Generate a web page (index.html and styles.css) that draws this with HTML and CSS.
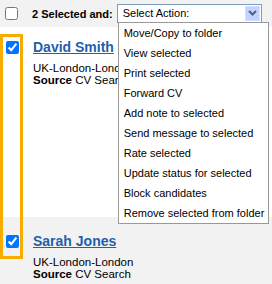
FILE: index.html
```html
<!DOCTYPE html>
<html lang="en">
<head>
    <meta charset="UTF-8">
    <title>Candidates</title>
    <link rel="stylesheet" href="styles.css">
</head>
<body>
    <div class="toolbar">
        <input type="checkbox" class="check">
        <span class="selected-label">2 Selected and:</span>
        <div class="select-box">
            <span class="select-text">Select Action:</span>
            <span class="select-button">
                <svg width="9" height="6" viewBox="0 0 9 6"><path d="M1 1 L4.5 4.5 L8 1" fill="none" stroke="#4d5f8c" stroke-width="2"/></svg>
            </span>
            <ul class="action-list">
                <li>Move/Copy to folder</li>
                <li>View selected</li>
                <li>Print selected</li>
                <li>Forward CV</li>
                <li>Add note to selected</li>
                <li>Send message to selected</li>
                <li>Rate selected</li>
                <li>Update status for selected</li>
                <li>Block candidates</li>
                <li>Remove selected from folder</li>
            </ul>
        </div>
    </div>

    <div class="results">
        <div class="highlight"></div>
        <div class="candidate first">
            <input type="checkbox" class="check" checked>
            <div class="details">
                <a href="#" class="name">David Smith</a>
                <div>UK-London-London</div>
                <div><b>Source</b> CV Search</div>
            </div>
        </div>
        <div class="candidate alt">
            <input type="checkbox" class="check" checked>
            <div class="details">
                <a href="#" class="name">Sarah Jones</a>
                <div>UK-London-London</div>
                <div><b>Source</b> CV Search</div>
            </div>
        </div>
    </div>
</body>
</html>
```

FILE: styles.css
```css
body {
    margin: 0;
    font-family: "Liberation Sans", Arial, sans-serif;
    font-size: 11px;
    color: #000;
    background: #fff;
}

.check {
    width: 13px;
    height: 13px;
    margin: 0;
    flex-shrink: 0;
}

.toolbar {
    position: relative;
    z-index: 2;
    display: flex;
    align-items: center;
    height: 27px;
    padding-left: 5px;
    background: #f2f2f2;
}

.selected-label {
    font-weight: bold;
    margin-left: 14px;
}

.select-box {
    position: relative;
    display: flex;
    align-items: center;
    width: 143px;
    height: 17px;
    margin-left: 4px;
    margin-top: -1px;
    border: 1px solid #7f9db9;
    background: #fff;
}

.select-text {
    flex: 1;
    padding-left: 5px;
}

.select-button {
    display: flex;
    align-items: center;
    justify-content: center;
    width: 15px;
    height: 15px;
    margin-right: 1px;
    background: #c3d3fd;
    border: 1px dotted #e2eafe;
    box-sizing: border-box;
}

.action-list {
    position: absolute;
    top: 17px;
    left: 0;
    width: 149px;
    margin: 0;
    padding: 0;
    list-style: none;
    background: #fff;
    border: 1px solid #999;
}

.action-list li {
    height: 20px;
    line-height: 20px;
    padding-left: 5px;
    white-space: nowrap;
}

.results {
    position: relative;
}

.candidate {
    display: flex;
    align-items: flex-start;
    padding-left: 6px;
    box-sizing: border-box;
}

.candidate.first {
    height: 190px;
    padding-top: 14px;
}

.candidate.alt {
    height: 67px;
    padding-top: 18px;
    background: #f2f2f2;
}

.details {
    margin-left: 14px;
    margin-top: -3px;
    font-size: 11.5px;
    line-height: 12px;
}

.name {
    display: block;
    width: fit-content;
    font-size: 14px;
    font-weight: bold;
    line-height: 18px;
    margin-bottom: 6px;
    color: #1f5fae;
}

.highlight {
    position: absolute;
    top: 7px;
    left: 0;
    width: 17px;
    height: 219px;
    border: 3px solid #f8ac00;
    z-index: 1;
}
```
